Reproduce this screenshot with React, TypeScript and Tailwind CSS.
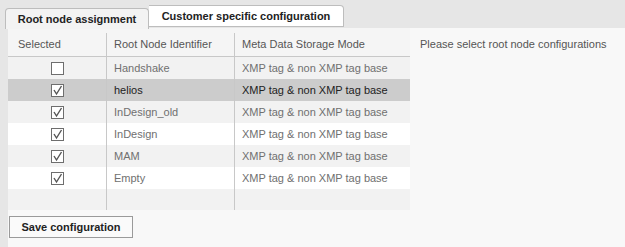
import React from 'react';

const rows = [
  { name: 'Handshake', checked: false },
  { name: 'helios', checked: true, selected: true },
  { name: 'InDesign_old', checked: true },
  { name: 'InDesign', checked: true },
  { name: 'MAM', checked: true },
  { name: 'Empty', checked: true },
];

function Checkbox({ checked }: { checked: boolean }) {
  return (
    <div className="w-[13px] h-[13px] border border-[#6e6e6e] bg-white flex items-center justify-center">
      {checked && (
        <svg width="11" height="11" viewBox="0 0 11 11">
          <path d="M2 5 L4.5 9 L9.5 1" fill="none" stroke="#555" strokeWidth="1.4" />
        </svg>
      )}
    </div>
  );
}

export default function App() {
  return (
    <div className="w-[625px] h-[247px] bg-[#e6e6e6] overflow-hidden font-['Liberation_Sans',Arial,sans-serif] text-[11px]">
      {/* Tabs */}
      <div className="h-[28px] flex items-end pl-[5px]">
        <div className="h-[21px] w-[144px] bg-[#f3f3f3] border border-b-0 border-[#bdbdbd] rounded-t-[4px] flex items-center justify-center font-bold text-[#222] -mb-px relative z-10">
          Root node assignment
        </div>
        <div className="h-[22px] w-[195px] bg-white border border-[#bdbdbd] border-l-0 rounded-tr-[4px] flex items-center justify-center font-bold text-[#222] mb-[1px]">
          Customer specific configuration
        </div>
      </div>

      <div className="ml-[8px] h-[219px] bg-[#f8f8f8] flex">
        <div className="w-[402px] flex flex-col pt-[5px] bg-[#f5f5f5]">
          <div className="flex h-[24px] border-b border-[#c8c8c8] text-[#555]">
            <div className="w-[99px] border-r border-[#c8c8c8] pl-[10px] flex items-center">Selected</div>
            <div className="w-[128px] border-r border-[#c8c8c8] pl-[7px] flex items-center">Root Node Identifier</div>
            <div className="flex-1 pl-[7px] flex items-center">Meta Data Storage Mode</div>
          </div>
          {rows.map((r, i) => (
            <div
              key={r.name}
              className={`flex h-[22px] ${r.selected ? 'bg-[#cccccc] text-[#222]' : i % 2 === 0 ? 'bg-[#f2f2f2] text-[#707070]' : 'bg-white text-[#707070]'}`}
            >
              <div className="w-[99px] border-r border-[#c8c8c8] flex items-center justify-center">
                <Checkbox checked={r.checked} />
              </div>
              <div className="w-[128px] border-r border-[#c8c8c8] pl-[7px] flex items-center">{r.name}</div>
              <div className="flex-1 pl-[7px] flex items-center whitespace-nowrap">XMP tag &amp; non XMP tag base</div>
            </div>
          ))}
          <div className="flex h-[21px] bg-[#f2f2f2]">
            <div className="w-[99px] border-r border-[#c8c8c8]" />
            <div className="w-[128px] border-r border-[#c8c8c8]" />
            <div className="flex-1" />
          </div>
          <div className="pt-[6px] pl-[1px] flex-1 bg-[#f8f8f8]">
            <button className="w-[124px] h-[22px] border border-[#9a9a9a] bg-[#fafafa] font-bold text-[#222] flex items-center justify-center">
              Save configuration
            </button>
          </div>
        </div>
        <div className="flex-1 pl-[10px] pt-[8px] text-[#555] whitespace-nowrap">Please select root node configurations</div>
      </div>
    </div>
  );
}
